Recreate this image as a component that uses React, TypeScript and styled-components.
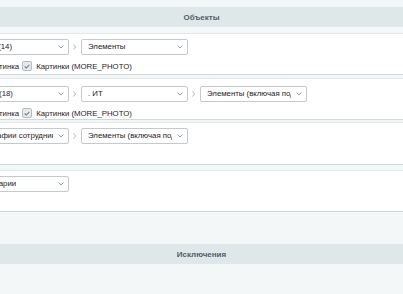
import React from "react";
import styled, { createGlobalStyle } from "styled-components";

const GlobalStyle = createGlobalStyle`
  html, body {
    margin: 0;
    padding: 0;
    background: #f4f7f8;
  }
  body {
    font-family: "Liberation Sans", Arial, sans-serif;
  }
`;

const Page = styled.div`
  width: 403px;
  height: 294px;
  overflow: hidden;
  padding-top: 7px;
  box-sizing: border-box;
`;

const SectionTitle = styled.div<{ $mt?: number }>`
  margin-top: ${(p) => p.$mt ?? 0}px;
  height: 20px;
  background: #dfe7e9;
  color: #535c69;
  font-size: 8px;
  font-weight: bold;
  display: flex;
  align-items: center;
  justify-content: center;
`;

const Block = styled.div<{ $mt: number; $pt: number; $h?: number }>`
  margin-top: ${(p) => p.$mt}px;
  height: ${(p) => p.$h ?? 42}px;
  box-sizing: border-box;
  background: #fff;
  border-top: 1px solid #e3e8ea;
  border-bottom: 1px solid #d3d9db;
  padding-top: ${(p) => p.$pt}px;
  overflow: hidden;
`;

const Row = styled.div<{ $ml?: number }>`
  display: flex;
  align-items: center;
  margin-left: ${(p) => p.$ml ?? -40}px;
  white-space: nowrap;
`;

const SelectBox = styled.div<{ $w: number }>`
  position: relative;
  width: ${(p) => p.$w}px;
  height: 16px;
  box-sizing: border-box;
  flex: none;
  border: 1px solid #c3c9cc;
  border-radius: 2px;
  background: #fff;
  color: #1f2224;
  font-size: 7.8px;
  line-height: 14px;
  padding: 0 15px 0 6px;
`;

const SelectText = styled.span`
  display: block;
  overflow: hidden;
  white-space: nowrap;
`;

const Chevron = styled.svg`
  position: absolute;
  right: 4px;
  top: 5px;
`;

const Sep = styled.svg`
  flex: none;
  margin: 0 5px 0 4px;
`;

const Checks = styled.div`
  display: flex;
  align-items: center;
  margin: 6px 0 0 -31px;
  font-size: 7.8px;
  color: #1f2224;
  white-space: nowrap;
`;

const Box = styled.span`
  width: 8px;
  height: 8px;
  flex: none;
  border: 1px solid #b4bcc0;
  border-radius: 2px;
  background: #e6eaec;
  display: flex;
  align-items: center;
  justify-content: center;
  margin: 0 4px 0 3px;
`;

const Select = ({ w, children }: { w: number; children: React.ReactNode }) => (
  <SelectBox $w={w}>
    <SelectText>{children}</SelectText>
    <Chevron width="6" height="4" viewBox="0 0 6 4">
      <path d="M0.5 0.5 L3 3 L5.5 0.5" fill="none" stroke="#8a9296" strokeWidth="0.9" />
    </Chevron>
  </SelectBox>
);

const Arrow = () => (
  <Sep width="3" height="6" viewBox="0 0 3 6">
    <path d="M0.4 0.5 L2.6 3 L0.4 5.5" fill="none" stroke="#9aa1a5" strokeWidth="0.8" />
  </Sep>
);

const Check = () => (
  <Box>
    <svg width="6" height="5" viewBox="0 0 6 5">
      <path d="M0.6 2.5 L2.3 4 L5.4 0.8" fill="none" stroke="#7b858a" strokeWidth="1.1" />
    </svg>
  </Box>
);

const CheckRow = () => (
  <Checks>
    <Check />
    Картинка
    <Check />
    Картинки (MORE_PHOTO)
  </Checks>
);

export default function App() {
  return (
    <Page>
      <GlobalStyle />
      <SectionTitle>Объекты</SectionTitle>

      <Block $mt={6} $pt={5}>
        <Row>
          <Select w={109}>Слайды (14)</Select>
          <Arrow />
          <Select w={107}>Элементы</Select>
        </Row>
        <CheckRow />
      </Block>

      <Block $mt={3} $pt={7}>
        <Row>
          <Select w={109}>Галерея (18)</Select>
          <Arrow />
          <Select w={107}>. ИТ</Select>
          <Arrow />
          <Select w={107}>Элементы (включая подразделы)</Select>
        </Row>
        <CheckRow />
      </Block>

      <Block $mt={2} $pt={5} $h={43}>
        <Row $ml={-35}>
          <Select w={104}>Фотографии сотрудников</Select>
          <Arrow />
          <Select w={107}>Элементы (включая подразделы)</Select>
        </Row>
      </Block>

      <Block $mt={5} $pt={5}>
        <Row>
          <Select w={109}>Комментарии</Select>
        </Row>
      </Block>

      <SectionTitle $mt={32}>Исключения</SectionTitle>
    </Page>
  );
}
